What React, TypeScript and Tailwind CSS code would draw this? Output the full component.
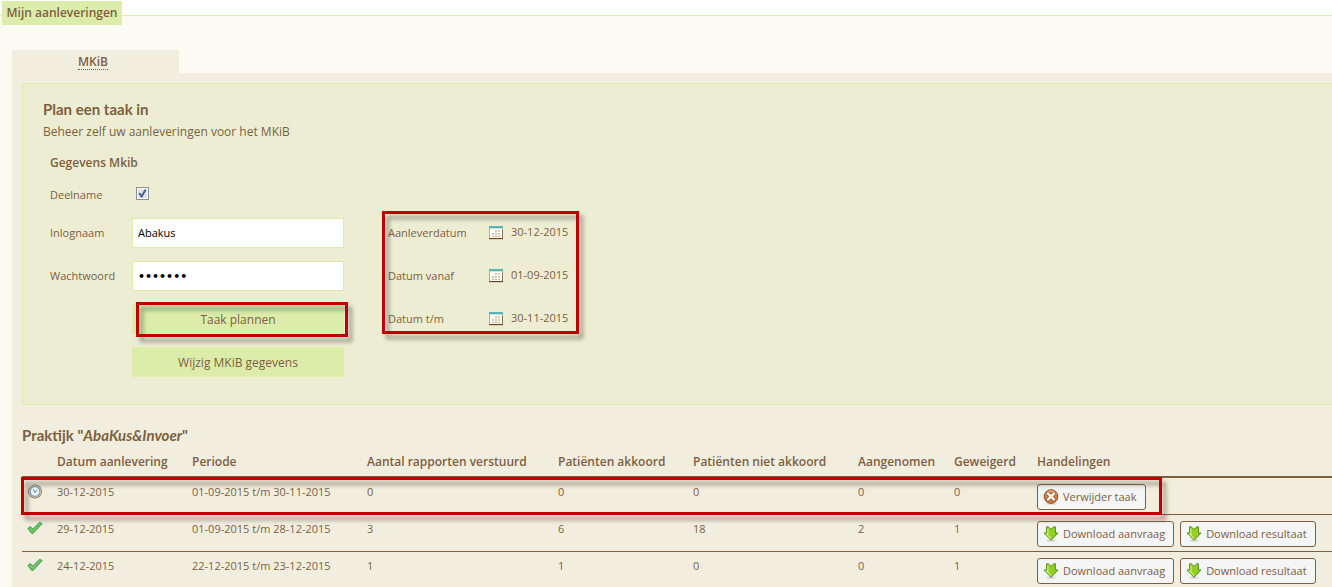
import { useState } from "react";

const textFont = "font-['Open_Sans','Noto_Sans',sans-serif]";
const headingFont = "font-[Lato,'Open_Sans',sans-serif]";
const highlightBox =
  "pointer-events-none absolute border-3 border-[#c00000] [filter:drop-shadow(4px_5px_2px_rgba(60,60,50,0.5))]";

function CalendarIcon() {
  return (
    <svg width="15" height="14" viewBox="0 0 15 14" aria-hidden="true">
      <rect x="0.5" y="0.5" width="13" height="12" fill="#fdfcf8" stroke="#b9ab92" />
      <path d="M0 0h14v2H0z" fill="#5bb3b5" />
      <path d="M1 2h12v1H1z" fill="#c5e2e0" />
      <path d="M13 4h1v9h-1z" fill="#8a6f4b" />
      <path d="M0 12h14v1H0z" fill="#6b4718" />
      <path d="M0 13h14v1H0z" fill="#d6d0b8" />
      <path d="M6 4h2v2H6zM9 4h2v2H9zM3 7h2v2H3zM6 7h2v2H6zM9 7h2v2H9z" fill="#d8c9b1" />
      <path d="M3 10h2v1H3zM6 10h2v1H6zM9 10h2v1H9z" fill="#c4af90" />
    </svg>
  );
}

function ClockIcon() {
  return (
    <svg width="16" height="16" viewBox="0 0 16 16" role="img" aria-label="Gepland">
      <circle cx="8" cy="7.5" r="7" fill="#94774a" />
      <circle cx="8" cy="7.5" r="6.2" fill="#dccba6" />
      <circle cx="8" cy="7.5" r="4.9" fill="#eef6fd" stroke="#7ba0d0" strokeWidth="1.2" />
      <path d="M6.4 5.4l1.4 3L10.4 6" fill="none" stroke="#64748b" strokeWidth="1" />
    </svg>
  );
}

function DoneIcon() {
  return (
    <svg width="16" height="14" viewBox="0 0 16 14" role="img" aria-label="Gereed">
      <path
        d="M0.8 7.6L3.2 5.4L5.8 8L12.6 1.2L15.2 2.6L6 12.6H4.8z"
        fill="#63b95c"
        stroke="#4a9a49"
        strokeWidth="0.9"
        strokeLinejoin="round"
      />
      <path d="M2.2 7.4L5.6 10L13.4 2.4" fill="none" stroke="#8fd185" strokeWidth="0.9" />
    </svg>
  );
}

function RemoveIcon() {
  return (
    <svg width="16" height="16" viewBox="0 0 16 16" aria-hidden="true">
      <ellipse cx="8" cy="14.6" rx="6" ry="1.2" fill="#d8d8d4" />
      <circle cx="8" cy="7.5" r="6.8" fill="#cf8148" stroke="#8e4519" />
      <path d="M2.6 5.5a6 6 0 0 1 10.8 0" fill="none" stroke="#e9b98f" strokeWidth="1.2" />
      <path d="M5 4.5l6 6M11 4.5l-6 6" stroke="#a8602f" strokeWidth="4" strokeLinecap="round" />
      <path d="M5 4.5l6 6M11 4.5l-6 6" stroke="#fff" strokeWidth="2.4" strokeLinecap="round" />
    </svg>
  );
}

function DownloadIcon() {
  return (
    <svg width="16" height="16" viewBox="0 0 16 16" aria-hidden="true">
      <ellipse cx="8" cy="14.6" rx="4.5" ry="1.2" fill="#d3d3cf" />
      <path
        d="M3.6 0.8H5.2L8 3.4L10.8 0.8H12.4V7H15L8 14.2L1 7H3.6z"
        fill="#93d022"
        stroke="#4f8f16"
        strokeLinejoin="round"
      />
      <path d="M4.9 2.4v5.8H3.6L8 12.6" fill="none" stroke="#d6f28a" strokeWidth="1.1" />
    </svg>
  );
}

function ActionButton({ kind, children }: { kind: "remove" | "download"; children: string }) {
  return (
    <button
      type="button"
      className="flex h-[26px] items-center gap-1 rounded-[3px] border border-[#7d5f3f] bg-[#f5f5f5] pr-2 pl-[5px] text-[11px] whitespace-nowrap"
    >
      {kind === "remove" ? <RemoveIcon /> : <DownloadIcon />}
      {children}
    </button>
  );
}

const columns = [
  { title: "", width: "w-[35px]" },
  { title: "Datum aanlevering", width: "w-[135px]" },
  { title: "Periode", width: "w-[175px]" },
  { title: "Aantal rapporten verstuurd", width: "w-[191px]" },
  { title: "Patiënten akkoord", width: "w-[135px]" },
  { title: "Patiënten niet akkoord", width: "w-[165px]" },
  { title: "Aangenomen", width: "w-[96px]" },
  { title: "Geweigerd", width: "w-[83px]" },
  { title: "Handelingen", width: "" },
];

const rows = [
  { planned: true, values: ["30-12-2015", "01-09-2015 t/m 30-11-2015", "0", "0", "0", "0", "0"] },
  { planned: false, values: ["29-12-2015", "01-09-2015 t/m 28-12-2015", "3", "6", "18", "2", "1"] },
  { planned: false, values: ["24-12-2015", "22-12-2015 t/m 23-12-2015", "1", "1", "0", "0", "1"] },
];

const dates = [
  { label: "Aanleverdatum", value: "30-12-2015" },
  { label: "Datum vanaf", value: "01-09-2015" },
  { label: "Datum t/m", value: "30-11-2015" },
];

const inputStyle = "h-[30px] w-full border border-[#dcedaa] bg-white px-[5px] text-[11px] text-black outline-none";
const formButton = "h-[30px] w-full bg-[#dcedaa] pt-px text-[12px]";

export default function App() {
  const [joined, setJoined] = useState(true);
  const [login, setLogin] = useState("Abakus");
  const [password, setPassword] = useState("geheim1");

  return (
    <div className={`overflow-x-hidden bg-white pt-[15px] text-[12px] leading-4 text-[#7d5f3f] ${textFont}`}>
      <main className="min-h-[calc(100vh-15px)] border-t border-[#dcedaa] bg-[#fbfbf3]">
        <h1 className="-mt-[15px] ml-[2px] flex h-6 w-[120px] items-center justify-center bg-[#dcedaa] font-semibold whitespace-nowrap">
          Mijn aanleveringen
        </h1>

        <div className="mt-[25px] ml-3">
          <nav className="flex h-[23px] w-[167px] items-center justify-center bg-[#f2eedf] pt-[2px] pr-[5px]">
            <a href="#mkib" className="border-b border-dotted border-[#7d5f3f] leading-[14px] font-semibold">
              MKiB
            </a>
          </nav>

          <div className="min-h-[514px] bg-[#f2eedf] pt-[10px] pl-[10px]">
            <section className="border border-r-0 border-[#dcedaa] bg-[#ededd3] px-5 pt-4 pb-[27px]">
              <h2 className={`text-[15px] leading-[18px] font-bold ${headingFont}`}>Plan een taak in</h2>
              <p className="mt-[6px]">Beheer zelf uw aanleveringen voor het MKiB</p>

              <form className="mt-[15px] pl-[7px] text-[11px]" onSubmit={(e) => e.preventDefault()}>
                <h3 className="text-[12px] font-semibold">Gegevens Mkib</h3>
                <div className="mt-4 flex items-start">
                  <label htmlFor="deelname" className="w-[82px]">
                    Deelname
                  </label>
                  <span className="ml-1 grid size-[13px] place-items-center">
                    <input
                      id="deelname"
                      type="checkbox"
                      checked={joined}
                      onChange={(e) => setJoined(e.target.checked)}
                      className="peer col-start-1 row-start-1 size-[13px] appearance-none border border-[#8e8f8f] bg-[#dfe2e8] shadow-[inset_0_0_0_1px_#fafafa]"
                    />
                    <svg
                      width="9"
                      height="9"
                      viewBox="0 0 9 9"
                      className="pointer-events-none invisible col-start-1 row-start-1 peer-checked:visible"
                      aria-hidden="true"
                    >
                      <path d="M1.2 4.2L3.6 7.4L7.6 0.8" fill="none" stroke="#4a5f97" strokeWidth="2" />
                    </svg>
                  </span>
                </div>

                <div className="mt-[15px] flex items-start">
                  <div className="grid grid-cols-[82px_212px] items-center gap-y-[13px]">
                    <label htmlFor="inlognaam">Inlognaam</label>
                    <input
                      id="inlognaam"
                      type="text"
                      value={login}
                      onChange={(e) => setLogin(e.target.value)}
                      className={`${inputStyle} pb-px`}
                    />
                    <label htmlFor="wachtwoord">Wachtwoord</label>
                    <input
                      id="wachtwoord"
                      type="password"
                      value={password}
                      onChange={(e) => setPassword(e.target.value)}
                      className={`${inputStyle} font-['DejaVu_Sans',sans-serif] font-bold`}
                    />
                    <div className="relative col-start-2">
                      <button type="button" className={formButton}>
                        Taak plannen
                      </button>
                      <div className={`${highlightBox} -top-[2px] -right-[4px] -bottom-[3px] left-1`} />
                    </div>
                    <button type="button" className={`${formButton} col-start-2`}>
                      Wijzig MKiB gegevens
                    </button>
                  </div>

                  <div className="relative ml-11 grid grid-cols-[101px_22px_58px] items-center gap-y-[13px]">
                    {dates.map((d) => (
                      <div key={d.label} className="contents">
                        <span className="flex h-[30px] items-center">{d.label}</span>
                        <button type="button" aria-label={`Kies ${d.label}`}>
                          <CalendarIcon />
                        </button>
                        <span className="pb-[2px]">{d.value}</span>
                      </div>
                    ))}
                    <div className={`${highlightBox} -top-[7px] -right-[10px] bottom-0 -left-[6px]`} />
                  </div>
                </div>
              </form>
            </section>

            <h2 className={`mt-[21px] text-[15px] leading-[18px] font-bold ${headingFont}`}>
              Praktijk "<em>AbaKus&amp;Invoer</em>"
            </h2>

            <div className="relative mt-2">
              <table className="w-full table-fixed border-collapse text-left">
                <thead>
                  <tr className="h-[25px] border-b-2 border-[#7d5f3f]">
                    {columns.map((c, i) => (
                      <th
                        key={i}
                        scope="col"
                        className={`p-0 pt-[2px] pb-[6px] align-top font-semibold whitespace-nowrap ${c.width}`}
                      >
                        {c.title}
                      </th>
                    ))}
                  </tr>
                </thead>
                <tbody>
                  {rows.map((r) => (
                    <tr key={r.values[0]} className="h-[37px] border-b border-[#7d5f3f] text-[11px] last:border-b-0">
                      <td className="p-0 pt-[6px] pl-[5px] align-top">{r.planned ? <ClockIcon /> : <DoneIcon />}</td>
                      {r.values.map((v, i) => (
                        <td key={i} className="p-0 pt-[6px] align-top whitespace-nowrap">
                          {v}
                        </td>
                      ))}
                      <td className="p-0 pt-[6px] align-top">
                        <div className="flex gap-[6px]">
                          {r.planned ? (
                            <ActionButton kind="remove">Verwijder taak</ActionButton>
                          ) : (
                            <>
                              <ActionButton kind="download">Download aanvraag</ActionButton>
                              <ActionButton kind="download">Download resultaat</ActionButton>
                            </>
                          )}
                        </div>
                      </td>
                    </tr>
                  ))}
                </tbody>
              </table>
              <div className={`${highlightBox} top-[25px] -left-px h-[38px] w-[1141px]`} />
            </div>
          </div>
        </div>
      </main>
    </div>
  );
}
